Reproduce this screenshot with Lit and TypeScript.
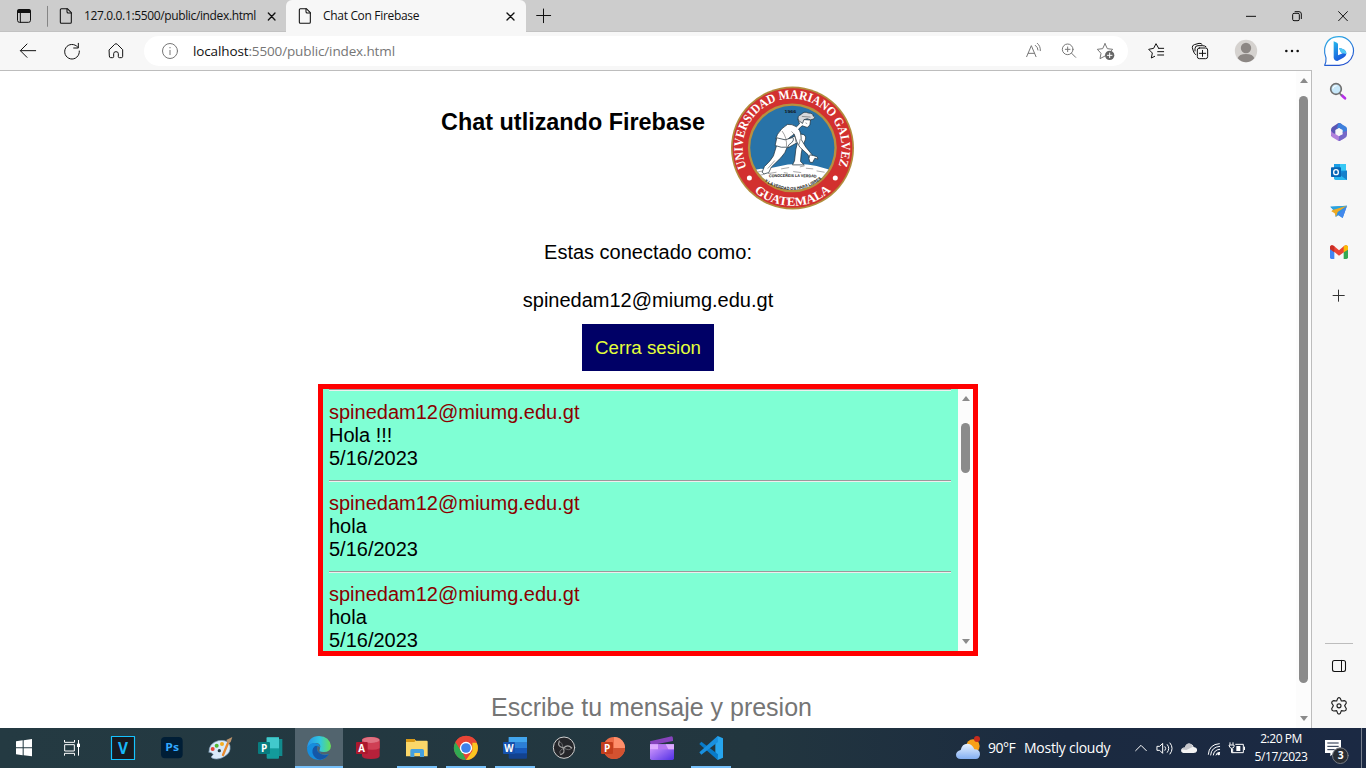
import { LitElement, html, svg, css } from "lit";
import { customElement } from "lit/decorators.js";

const box = (w: number, h: number, x: number, y: number, body: unknown) => html`<svg
  width=${w}
  height=${h}
  viewBox="${x} ${y} ${w * 3} ${h * 3}"
  fill="none"
  stroke-linecap="round"
  stroke-linejoin="round"
>${body}</svg>`;

const pageGlyph = (x: number) => svg`<g transform="translate(${x} 0)" stroke="#111" stroke-width="3.2">
  <path d="M4 26H22L34 38V67Q34 70 31 70H4Q1 70 1 67V29Q1 26 4 26Z"/><path d="M21 26V35Q21 39 25 39H34"/></g>`;

const star = (x: number) => svg`<path transform="translate(${x} 0)"
  d="M24 131L31 146L47 148L36 160M24 131L17 146L1 148L12 160L9 176L24 168"/>`;

const seal = html`<svg class="seal" width="124" height="124" viewBox="34 35 371 371">
  <defs>
    <path id="ringTop" d="M81 279A148 148 0 1 1 359 263" />
    <path id="ringLow" d="M103 350A173 173 0 0 0 334 348" />
    <path id="mottoA" d="M148 308Q218 306 293 309" />
    <path id="mottoB" d="M134 320Q216 375 303 315" />
    <clipPath id="disc"><circle cx="217.500" cy="220" r="126" /></clipPath>
  </defs>
  <circle cx="218" cy="220.500" r="184" fill="#b28c3c" />
  <circle cx="218" cy="220.500" r="179" fill="#d2302f" />
  <circle cx="217.500" cy="220" r="133" fill="#b8903f" />
  <circle cx="217.500" cy="220" r="126" fill="#2873a8" />
  <g clip-path="url(#disc)">
    <path d="M80 302Q106 278 135 284L204 270Q250 266 290 274L360 294V360H80Z" fill="#fff" />
    <path d="M115 292l20-4M145 297l25-4M184 283l24-4M220 291l24 3M258 281l22 2M290 289l24 4M120 302l14-3M192 294l12 2M240 277l14-3" stroke="#555" stroke-width="1.500" />
    <g transform="translate(54 60)" fill="#fff" stroke="#21333e" stroke-width="2.200" stroke-linejoin="round">
      <path d="M142 138Q165 125 190 119Q206 120 203 134Q192 155 190 178L188 201L199 211H164L170 199L174 164L179 144L150 160Z" />
      <path d="M117 151L149 156Q143 176 129 190L101 217L93 234L79 238L73 233L80 216Q99 199 107 184Z" />
      <path d="M180 74L185 88L176 97Q162 88 149 90Q130 101 119 120L114 133L146 138Q155 128 169 119Q176 145 186 158L210 180L216 194L225 191L222 180L204 158L190 135Q190 112 182 104L193 94L208 99L216 92L218 77Z" />
      <path d="M117 130L142 136L165 129Q172 139 153 151L150 158Q130 161 112 153Z" />
      <path d="M182 78Q177 64 189 61Q198 49 212 56Q226 56 226 65Q235 68 227 74Q218 79 208 73L198 76L194 87Z" fill="#d7d9dc" />
      <path d="M216 181L226 183L238 187L240 194L231 191L224 204L216 203L213 192Z" />
    </g>
    <path d="M187 170Q202 190 200 216M215 171Q228 181 228 204M165 258L144 282M241 194L238 210M246 126L272 128M257 145L262 148" stroke="#444" stroke-width="1.500" fill="none" />
  </g>
  <g class="ring">
    <text font-size="38"><textPath href="#ringTop" textLength="578" lengthAdjust="spacingAndGlyphs">UNIVERSIDAD MARIANO GALVEZ</textPath></text>
    <text font-size="37"><textPath href="#ringLow" textLength="252" lengthAdjust="spacingAndGlyphs">GUATEMALA</textPath></text>
  </g>
  <circle cx="89" cy="310" r="7.500" fill="#fff" /><circle cx="346" cy="310" r="7.500" fill="#fff" />
  <g class="motto">
    <text x="194" y="117" font-size="13" textLength="35" lengthAdjust="spacingAndGlyphs">1966</text>
    <text font-size="12"><textPath href="#mottoA" textLength="142" lengthAdjust="spacingAndGlyphs">CONOCEREIS LA VERDAD</textPath></text>
    <text font-size="13"><textPath href="#mottoB" textLength="184" lengthAdjust="spacingAndGlyphs">Y LA VERDAD OS HARA LIBRES</textPath></text>
  </g>
</svg>`;

@customElement("browser-tabs")
class BrowserTabs extends LitElement {
  static styles = css`
    :host { display: flex; height: 32px; background: #cdcdcd; color: #111; font: 12px "Open Sans", "Noto Sans", sans-serif; box-shadow: inset 0 -1px #c2c2c2; }
    svg { display: block; flex: none; }
    .tab { display: flex; }
    .label { line-height: 31px; white-space: nowrap; }
    .first { width: 176px; letter-spacing: -0.36px; }
    .active { background: #f7f7f7; width: 240px; border-radius: 6px 6px 0 0; }
    .second { width: 172px; letter-spacing: -0.32px; }
    .gap { flex: 1; }
  `;
  render() {
    return html`
      ${box(54, 32, 0, 0, svg`<rect x="52.500" y="29" width="39" height="38" rx="6" stroke="#111" stroke-width="3"/><path d="M51 39V34Q51 27 58 27H86Q93 27 93 34V39Z" fill="#111"/><path d="M61 39V67" stroke="#111" stroke-width="3"/><path d="M142.500 19V79" stroke="#858585" stroke-width="3"/>`)}
      <div class="tab">
        ${box(30, 32, 162, 0, pageGlyph(180))}
        <span class="label first">127.0.0.1:5500/public/index.html</span>
        ${box(26, 32, 780, 0, svg`<path d="M805 39L825 60M825 39L805 60" stroke="#111" stroke-width="4"/>`)}
      </div>
      <div class="tab active">
        ${box(37, 32, 18, 0, pageGlyph(57))}
        <span class="label second">Chat Con Firebase</span>
        ${box(31, 32, 645, 0, svg`<path d="M681 39L702 60M702 39L681 60" stroke="#111" stroke-width="4"/>`)}
      </div>
      ${box(40, 32, 738, 0, svg`<path d="M770 46.500H812M790.500 27V68" stroke="#111" stroke-width="3"/>`)}
      <div class="gap"></div>
      ${box(139, 32, 651, 0, svg`<g stroke="#111" stroke-width="3" stroke-linecap="butt"><path d="M708 49H738"/><rect x="848" y="40" width="20" height="22" rx="4"/><path d="M854 35H867Q874 35 874 42V57"/><path d="M985 34L1013 63M1013 34L985 63"/></g>`)}
    `;
  }
}

@customElement("browser-toolbar")
class BrowserToolbar extends LitElement {
  static styles = css`
    :host { display: flex; align-items: center; height: 38px; background: #f7f7f7; font: 13.5px "Open Sans", "Noto Sans", sans-serif; padding-left: 6px; }
    svg { display: block; flex: none; }
    .address { display: flex; width: 984px; height: 30px; margin: 0 6px; border-radius: 15px; background: #fff; }
    .url { flex: 1; line-height: 30px; color: #767676; letter-spacing: -0.13px; white-space: nowrap; }
    .host { color: #111; }
  `;
  render() {
    return html`
      ${box(44, 38, 18, 96, svg`<path d="M107 152H62M81 132L61 152L81 172" stroke="#111" stroke-width="3"/>`)}
      ${box(44, 38, 150, 96, svg`<path d="M233 141A22 22 0 1 0 238 153M235 130V144H221" stroke="#111" stroke-width="3"/>`)}
      ${box(44, 38, 282, 96, svg`<path d="M328 149L344 133Q348 129 352 133L368 149V169Q368 173 364 173H358Q355 173 355 170V161Q355 155 348 155Q341 155 341 161V170Q341 173 338 173H332Q328 173 328 169Z" stroke="#111" stroke-width="3"/>`)}
      <div class="address">
        ${box(49, 30, 432, 108, svg`<circle cx="510" cy="153" r="22.500" stroke="#777" stroke-width="3"/><path d="M510 151V164" stroke="#777" stroke-width="3"/><circle cx="510" cy="143" r="2" fill="#777"/>`)}
        <div class="url"><span class="host">localhost</span>:5500/public/index.html</div>
        ${box(108, 30, 30, 108, svg`<g stroke="#777" stroke-width="3">
          <path d="M50 170L64 137L78 170M55 160H73M76 136Q84 142 84 150M82 130Q92 138 91 152"/>
          <circle cx="173" cy="148" r="16"/><path d="M173 141V155M166 148H180M185 160L197 172"/>
          ${star(261)}</g><circle cx="299" cy="166" r="14" fill="#666"/><path d="M299 159V173M292 166H306" stroke="#fff" stroke-width="3"/>`)}
      </div>
      ${box(44, 38, 372, 96, svg`<g stroke="#111" stroke-width="3"><path d="M446 145L438 131L431 145L416 148L427 159L424 174L434 169M446 145H461M443 155H461M443 165H461"/></g>`)}
      ${box(44, 38, 504, 96, svg`<g stroke="#111" stroke-width="3"><rect x="562" y="144" width="31" height="32" rx="6"/><path d="M577.500 151V169M568 160H587M557 164Q552 160 550 153L547 143Q546 136 553 134L567 130Q574 129 577 134M555 153V146Q555 137 564 137H578Q585 137 588 140"/></g>`)}
      ${box(48, 38, 636, 96, svg`<circle cx="708" cy="153" r="33.500" fill="#d5d2cf"/><circle cx="708" cy="144" r="15.500" fill="#8c8784"/><path d="M683 175Q687 162 708 162Q729 162 733 175Q722 187 708 187Q694 187 683 175Z" fill="#8c8784"/>`)}
      ${box(42, 38, 780, 96, svg`<g fill="#111"><circle cx="829" cy="153" r="3.800"/><circle cx="846" cy="153" r="3.800"/><circle cx="863" cy="153" r="3.800"/></g>`)}
    `;
  }
}

@customElement("browser-sidebar")
class BrowserSidebar extends LitElement {
  static styles = css`
    :host { display: flex; flex-direction: column; width: 54px; background: #f7f7f7; }
    svg { display: block; flex: none; }
    .gap { flex: 1; }
  `;
  render() {
    return html`
      ${box(54, 40, 906, 96, svg`<defs><linearGradient id="rim" x1="0" y1="0" x2=".4" y2="1"><stop stop-color="#2fb5e8"/><stop offset="1" stop-color="#2454cf"/></linearGradient><linearGradient id="bee" x1="0" y1="0" x2=".5" y2="1"><stop stop-color="#26b8ec"/><stop offset="1" stop-color="#1a56dc"/></linearGradient></defs>
        <path d="M944 196Q949 186 948 174Q942 160 944 146Q951 110 987 110Q1007 110 1020 125Q1035 143 1029 164Q1020 193 987 196Z" fill="#fff" stroke="url(#rim)" stroke-width="3.500"/>
        <path d="M971 124L981 128Q984 130 984 133V166L998 160L993 157L988 146Q987 143 991 144L1003 149Q1010 153 1009 162Q1008 169 1000 173L982 183Q972 181 971 173Z" fill="url(#bee)"/><path d="M988 146Q987 143 991 144L1003 149Q1010 153 1009 162L998 160L993 157Z" fill="#51c9f4"/>`)}
      ${box(54, 40, 66, 6, svg`<path d="M155 76L165 85" stroke="#b52ee8" stroke-width="8"/><path d="M149 70L154 75" stroke="#777" stroke-width="5"/><circle cx="138" cy="57" r="16" fill="#c7e8fa" stroke="#707070" stroke-width="5"/><path d="M129 55Q130 47 139 47" stroke="#fff" stroke-width="3"/>`)}
      ${box(54, 40, 66, 126, svg`<path d="M144 160L127 171Q123 174 123 180V199L136 192V180L147 173L156 178V163L151 160Q147 158 144 160Z" fill="#5b56b4"/><path d="M145 160Q149 158 153 161L168 170Q172 173 171 179V195L158 188V180L147 173L140 177Z" fill="#3f80dc"/><path d="M123 182Q127 189 136 192L147 199L155 195L163 205L150 212Q146 214 142 211L127 202Q123 199 123 194Z" fill="#b281dc"/><path d="M158 187L171 182V194Q171 200 166 203L150 212Q148 213 146 213L147 199L158 193Z" fill="#7468c8"/>`)}
      ${box(54, 40, 66, 246, svg`<path d="M132 282H168V326H132Z" fill="#1489d8"/><path d="M150 282H168V302H150Z" fill="#38c8f5"/><path d="M132 282H150V302H132Z" fill="#1a9ee6"/><path d="M148 313L171 301V330H147Q137 330 132 320Z" fill="#1780ca"/><path d="M132 304L150 315L171 330H137Q132 330 132 325Z" fill="#29b6ee"/><rect x="123" y="292" width="30" height="29" rx="2" fill="#0866b5"/><ellipse cx="138" cy="306.500" rx="7" ry="7.500" stroke="#fff" stroke-width="4"/>`)}
      ${box(54, 40, 66, 366, svg`<path d="M121 410L171 407L158 444L145 436L137 441L134 424Z" fill="#2e91e4"/><path d="M121 410L171 407L134 424Z" fill="#2aa4df"/><path d="M128 420L171 407L143 426L138 441L134 430L124 424Z" fill="#edaa24"/><path d="M171 407L145 434L158 444Z" fill="#4388ec"/>`)}
      ${box(54, 44, 66, 486, svg`<path d="M120 530H133V567H124Q120 567 120 562Z" fill="#4285f4"/><path d="M161 540L174 530V562Q174 567 169 567H161Z" fill="#34a853"/><path d="M120 535V530Q124 522 132 528L147 541L162 528Q170 522 174 530V538L147 557Z" fill="#ea4335"/><path d="M161 529Q169 522 174 529V539L161 547Z" fill="#fbbc04"/><path d="M120 530V538L133 547V529Q124 522 120 530Z" fill="#c92e25"/>`)}
      ${box(54, 40, 66, 618, svg`<path d="M128 676.500H164M145.500 659V695" stroke="#333" stroke-width="3" stroke-linecap="butt"/>`)}
      <div class="gap"></div>
      ${box(54, 88, 96, 60, svg`<path d="M135 70.500H219" stroke="#bdbdbd" stroke-width="3" stroke-linecap="butt"/><rect x="157.500" y="121.500" width="39" height="33" rx="6" stroke="#111" stroke-width="3.200"/><path d="M184.500 121V155" stroke="#111" stroke-width="3"/>
        <path d="M173 235Q177 231 181 235L184 243L193 242Q199 243 199 249L194 257L199 266Q199 272 193 273L184 272L181 280Q177 284 173 280L170 272L161 273Q155 272 155 266L160 257L155 249Q155 243 161 242L170 243Z" stroke="#222" stroke-width="3.500"/><circle cx="177" cy="257.500" r="6" stroke="#222" stroke-width="3.500"/>`)}
    `;
  }
}

@customElement("scroll-track")
class ScrollTrack extends LitElement {
  static styles = css`
    :host { display: flex; flex-direction: column; align-items: center; width: 15px; flex: none; background: #fcfcfc; box-sizing: border-box; }
    .thumb { width: 9px; border-radius: 5px; background: #8b8b8b; height: var(--thumb); margin-top: var(--offset); }
    .arrow { width: 0; height: 0; border: 4.5px solid transparent; }
    .up { border-top: 0; border-bottom: 5px solid #8b8b8b; margin-top: 7px; }
    .down { border-bottom: 0; border-top: 5px solid #8b8b8b; margin: auto 0 7px; }
  `;
  render() {
    return html`<div class="arrow up"></div><div class="thumb"></div><div class="arrow down"></div>`;
  }
}

@customElement("chat-page")
class ChatPage extends LitElement {
  static styles = css`
    :host { display: flex; flex: 1; min-height: 0; overflow: hidden; background: #fff; border-top: 1px solid #bdbdbd; border-right: 1px solid #bdbdbd; font: 20px/23px "Liberation Sans", Arial, sans-serif; color: #000; }
    .page { flex: 1; display: flex; flex-direction: column; align-items: center; }
    .head { display: flex; gap: 26px; margin-top: 15px; }
    .seal { display: block; }
    .ring { font-family: "Liberation Serif", serif; font-weight: bold; fill: #fff; }
    .motto { font-family: "Liberation Sans", sans-serif; font-weight: bold; fill: #111; }
    h3 { margin: 23px 0 0; font-size: 23.4px; line-height: 27px; white-space: nowrap; }
    .state { margin-top: 31px; }
    .user { margin-top: 25px; }
    button { margin: 12px 0 13px; width: 132px; height: 47px; padding: 0; border: 0; background: #000066; color: #e4ff3a; font: 18.7px "Liberation Sans", Arial, sans-serif; }
    .chat { display: flex; box-sizing: border-box; width: 660px; height: 272px; border: 5px solid #f00; background: #7fffd4; overflow: hidden; flex: none; }
    .messages { flex: 1; padding: 0 7px 0 6px; }
    hr { margin: 10px 0; border: 0; height: 1px; background: #9a9a9a; border-bottom: 1px solid #eee; }
    hr:first-child { margin-top: 0; }
    .from { color: #8b0000; }
    .compose { margin-top: 37px; width: 320px; margin-left: 6px; font-size: 25px; line-height: 29px; color: #757575; white-space: nowrap; overflow: hidden; flex: none; }
    .inner { --thumb: 50px; --offset: 22px; }
    .outer { --thumb: 587px; --offset: 13px; }
  `;
  messages = ["Hola !!!", "hola", "hola"];
  render() {
    return html`
      <div class="page">
        <div class="head"><h3>Chat utlizando Firebase</h3>${seal}</div>
        <div class="state">Estas conectado como:</div>
        <div class="user">spinedam12@miumg.edu.gt</div>
        <button>Cerra sesion</button>
        <div class="chat">
          <div class="messages">
            ${this.messages.map((m) => html`<hr /><div class="from">spinedam12@miumg.edu.gt</div><div>${m}</div><div>5/16/2023</div>`)}
          </div>
          <scroll-track class="inner"></scroll-track>
        </div>
        <div class="compose">Escribe tu mensaje y presion</div>
      </div>
      <scroll-track class="outer"></scroll-track>
    `;
  }
}

const line = (x: number, w = 120) => svg`<rect x=${x} y="126" width=${w} height="6" fill="#76c0fa"/>`;

@customElement("task-bar")
class TaskBar extends LitElement {
  static styles = css`
    :host { display: flex; height: 40px; color: #fff; background: linear-gradient(90deg, #243a42, #22363f 55%, #1b2a40 78%, #1b2943); font: 14px "Open Sans", "Noto Sans", sans-serif; }
    svg { display: block; flex: none; }
    .pinned { display: flex; margin-left: 2px; }
    .gap { flex: 1; }
    .weather { display: flex; width: 172px; gap: 5px; padding-left: 4px; line-height: 40px; letter-spacing: -0.27px; white-space: nowrap; }
    .degrees { width: 31px; letter-spacing: -0.5px; }
    .clock { width: 62px; text-align: center; font-size: 12px; line-height: 18px; padding-top: 2px; letter-spacing: -0.45px; }
    .glyph { font-family: "Open Sans", sans-serif; font-weight: bold; fill: #fff; letter-spacing: 0; }
    .blue { fill: #31a8ff; }
    .cyan { fill: #18b8f8; }
  `;
  render() {
    return html`
      ${box(48, 40, 0, 12, svg`<path d="M48 52L68 49V70H48ZM71 48.500L96 45V70H71ZM48 73H68V94L48 91ZM71 73H96V97L71 94Z" fill="#fff"/>`)}
      ${box(48, 40, 144, 12, svg`<g stroke="#fff" stroke-width="3" stroke-linecap="butt"><rect x="194" y="62" width="29" height="19"/><path d="M193.500 48V55H223.500V48M193.500 95V88H223.500V95M235.500 48V95"/></g><rect x="231" y="59" width="9" height="10" fill="#fff"/>`)}
      <div class="pinned">
        ${box(49, 40, 294, 12, svg`<rect x="334.500" y="37.500" width="69" height="69" fill="#171a20" stroke="#16c3ff" stroke-width="3.500"/><text class="glyph cyan" x="354" y="89" font-size="47" textLength="30" lengthAdjust="spacingAndGlyphs">V</text>`)}
        ${box(49, 40, 441, 12, svg`<rect x="483" y="39" width="65" height="64" rx="12" fill="#001e36"/><text class="glyph blue" x="496" y="82" font-size="32" textLength="41" lengthAdjust="spacingAndGlyphs">Ps</text>`)}
        ${box(49, 40, 588, 12, svg`<path d="M627 84Q626 58 655 50Q686 46 690 66Q693 86 674 97Q654 110 636 102Q631 98 640 92Q638 86 627 84Z" fill="#d9eafa" stroke="#8eabc4" stroke-width="2"/><circle cx="638" cy="75" r="6" fill="#e54536"/><circle cx="650" cy="65" r="6" fill="#52b832"/><circle cx="666" cy="60" r="6" fill="#f5ad20"/><circle cx="658" cy="80" r="5" fill="#243b44"/><path d="M669 93L684 57" stroke="#e7892e" stroke-width="7"/><path d="M679 48L697 39L692 54L685 59Z" fill="#bc946d"/>`)}
        ${box(49, 40, 735, 12, svg`<rect x="820" y="45" width="27" height="51" fill="#118b8d"/><rect x="800" y="40" width="37" height="64" rx="3" fill="#139b9b"/><rect x="800" y="40" width="37" height="33" fill="#42c9cc"/><rect x="774" y="54" width="36" height="36" rx="3" fill="#087d80"/><text class="glyph" x="783" y="83" font-size="30">P</text>`)}
        ${box(49, 40, 882, 12, svg`<defs><linearGradient id="wave" x1="0" x2="1"><stop stop-color="#2694e9"/><stop offset=".55" stop-color="#31c7df"/><stop offset="1" stop-color="#68df55"/></linearGradient></defs><rect x="885" y="12" width="144" height="120" fill="#52646e"/>${line(885, 144)}<path d="M921 72Q925 36 957 36Q989 38 993 66Q992 84 971 84Q954 84 959 75Q966 61 950 57Q934 55 921 72Z" fill="url(#wave)"/><path d="M921 72Q931 54 949 58Q963 62 959 75Q954 84 971 90L986 90Q976 108 956 108Q922 105 921 72Z" fill="#168ddd"/><path d="M945 66Q931 78 941 95Q950 107 961 107Q978 105 986 91Q969 98 956 85Q948 78 953 65Z" fill="#1557a7"/><path d="M953 66Q948 78 957 86Q969 96 985 90Q986 87 981 86Q974 89 964 86Q954 83 959 75Q962 69 953 66Z" fill="#52646e"/>`)}
        ${box(49, 40, 1029, 12, svg`<path d="M1086 48Q1086 39 1113 39Q1139 39 1139 48V96Q1138 105 1113 105Q1087 105 1086 96Z" fill="#b6213a"/><path d="M1086 50Q1112 64 1139 50V73Q1120 82 1086 73Z" fill="#cf3f54"/><ellipse cx="1112.500" cy="48" rx="26.500" ry="9" fill="#df7181"/><rect x="1068" y="54" width="35" height="36" rx="3" fill="#ad182d"/><text class="glyph" x="1075" y="83" font-size="29">A</text>`)}
        ${box(49, 40, 6, 12, svg`<path d="M48 48Q48 45 51 45H73L78 50H110Q113 50 113 53V97H48Z" fill="#fbd769"/><path d="M48 48Q48 45 51 45H73L77 50L73 54H48Z" fill="#d99916"/><path d="M61 99V80Q61 75 65 75H97Q102 75 102 80V99H90V87H73V99Z" fill="#45a1df"/>${line(21)}`)}
        ${box(49, 40, 153, 12, svg`<circle cx="228" cy="72" r="36" fill="#e94536"/><path d="M196.500 54L220 91L228 108A36 36 0 0 1 196.500 54Z" fill="#31a952"/><path d="M228 108L247 81V56H260A36 36 0 0 1 228 108Z" fill="#fbc520"/><path d="M228 54H260A36 36 0 0 0 196.500 54L212 79Z" fill="#e94536"/><circle cx="228" cy="72" r="18.500" fill="#fff"/><circle cx="228" cy="72" r="14.500" fill="#3f82eb"/>${line(168)}`)}
        ${box(49, 40, 300, 12, svg`<rect x="356" y="39" width="55" height="65" rx="3" fill="#13428f"/><path d="M356 39H411V56H356Z" fill="#42a5ee"/><path d="M356 56H411V72H356Z" fill="#2c7ed5"/><path d="M356 72H411V88H356Z" fill="#1859ba"/><rect x="339" y="54" width="36" height="36" rx="3" fill="#1551ad"/><text class="glyph" x="343" y="83" font-size="29" textLength="28" lengthAdjust="spacingAndGlyphs">W</text>${line(315)}`)}
        ${box(49, 40, 447, 12, svg`<circle cx="522" cy="71" r="32" fill="#25262a" stroke="#d0d0d0" stroke-width="3"/><g stroke="#a9a9a9" stroke-width="3.500"><path d="M519 71Q501 68 508 51M521 72Q533 59 545 72M520 73Q527 87 512 92"/></g><path d="M508 53Q517 54 519 71M545 72Q540 83 521 72M512 91Q503 82 520 73" stroke="#8b8b8b" stroke-width="2"/>`)}
        ${box(49, 40, 594, 12, svg`<circle cx="672" cy="72" r="33" fill="#ed6c47"/><path d="M672 39A33 33 0 0 1 705 72H672Z" fill="#ff8f6b"/><path d="M639 72H705A33 33 0 0 1 639 72Z" fill="#d35230"/><rect x="633" y="54" width="36" height="36" rx="3" fill="#c43e1c"/><text class="glyph" x="642" y="83" font-size="30">P</text>`)}
        ${box(49, 40, 741, 12, svg`<defs><linearGradient id="clap" x1="0" y1="0" x2="1" y2="1"><stop stop-color="#dca0ff"/><stop offset="1" stop-color="#5130e5"/></linearGradient></defs><path d="M780 52L845 37Q849 38 849 45V51L782 64Z" fill="#8743bd"/><path d="M780 61H852V103Q852 108 847 108H785Q780 108 780 103Z" fill="url(#clap)"/><path d="M780 61H852V76H780Z" fill="#b575f1"/><path d="M780 61H804V76H780ZM827 61H852V76H835Z" fill="#ddaaff"/>`)}
        ${box(49, 40, 888, 12, svg`<path d="M983 36L999 43V101L983 108L976 99V46Z" fill="#26a5ee"/><path d="M983 108L928 60L934 53L984 91Z" fill="#087bc9"/><path d="M983 36L928 85L934 92L984 54Z" fill="#1990df"/>${line(903)}`)}
      </div>
      <div class="gap"></div>
      <div class="weather">
        ${box(27, 40, 48, 12, svg`<defs><linearGradient id="cloud" x1="0" y1="0" x2="0" y2="1"><stop stop-color="#e9f3ff"/><stop offset="1" stop-color="#83aef1"/></linearGradient></defs><circle cx="99" cy="66" r="20" fill="#f8a019"/><circle cx="111" cy="45" r="9" fill="#c72b1c"/><path d="M62 105Q48 104 48 92Q49 81 62 78Q67 58 83 59Q98 61 103 76Q120 76 120 91Q119 105 107 105Z" fill="url(#cloud)"/>`)}
        <span class="degrees">90°F</span><span>Mostly cloudy</span>
      </div>
      ${box(122, 40, 564, 12, svg`<g stroke="#fff" stroke-width="3"><path d="M587 80L603 64L619 80"/><path d="M652 67H659L668 58V88L659 79H652ZM675 68Q680 73 675 79M682 62Q691 73 682 85M690 57Q703 73 690 90"/><path d="M805 91Q807 61 838 59M812 93Q814 69 839 67M820 93Q822 77 839 76M828 93Q829 85 839 85"/></g><circle cx="836" cy="90" r="4" fill="#fff"/><path d="M730 87Q721 85 724 76Q728 70 734 71Q740 55 753 60Q760 63 761 69Q773 71 771 81Q769 87 761 87Z" fill="#f4f4f4"/><path d="M724 76Q728 70 734 71Q740 55 753 60L759 68L739 78Z" fill="#c4c5ca"/><g stroke="#fff" stroke-width="3" stroke-linecap="butt"><path d="M886 61H910V86H878V75M913.500 68V78M870 55V62M879 55V62M867 63H882V68Q881 73 874.500 73Q868 72 867 63M874.500 73V86H880"/></g><rect x="889" y="66" width="12" height="15" fill="#fff"/>`)}
      <div class="clock">2:20 PM<br />5/17/2023</div>
      ${box(54, 40, 1116, 12, svg`<path d="M1155 48H1203V87H1182L1171 97V87H1155Z" fill="#fff"/><path d="M1162 57H1196M1162 67H1196M1162 77H1184" stroke="#1b2943" stroke-width="3" stroke-linecap="butt"/><circle cx="1201" cy="95" r="23.500" fill="#292d33" stroke="#777b82" stroke-width="3"/><text class="glyph" x="1193" y="106" font-size="31">3</text><path d="M1264.500 12V132" stroke="#777f8d" stroke-width="3"/>`)}
    `;
  }
}

@customElement("app-root")
class AppRoot extends LitElement {
  static styles = css`
    :host { display: flex; flex-direction: column; width: 1366px; height: 768px; overflow: hidden; }
    .body { display: flex; flex: 1; min-height: 0; }
    .left { display: flex; flex-direction: column; width: 1312px; min-height: 0; }
  `;
  render() {
    return html`
      <browser-tabs></browser-tabs>
      <div class="body">
        <div class="left"><browser-toolbar></browser-toolbar><chat-page></chat-page></div>
        <browser-sidebar></browser-sidebar>
      </div>
      <task-bar></task-bar>
    `;
  }
}
